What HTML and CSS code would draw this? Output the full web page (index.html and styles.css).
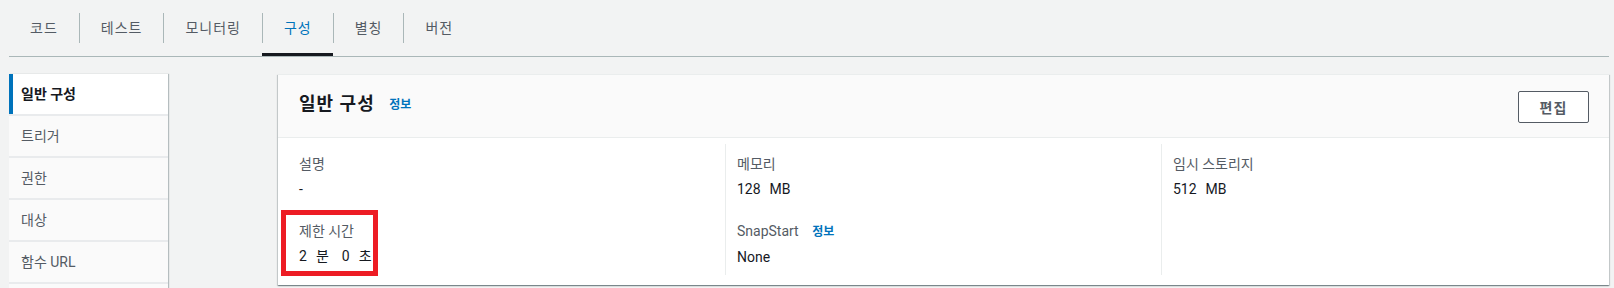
FILE: index.html
```html
<!DOCTYPE html>
<html lang="ko">
<head>
  <meta charset="UTF-8" />
  <meta name="viewport" content="width=device-width, initial-scale=1.0"/>
  <title>함수 구성</title>
  <link rel="stylesheet" href="styles.css">
</head>
<body>

  <nav class="tabs">
    <a class="tab" href="#"><span class="tab-label">코드</span></a>
    <a class="tab" href="#"><span class="tab-label">테스트</span></a>
    <a class="tab" href="#"><span class="tab-label">모니터링</span></a>
    <a class="tab active" href="#"><span class="tab-label">구성</span></a>
    <a class="tab" href="#"><span class="tab-label">별칭</span></a>
    <a class="tab" href="#"><span class="tab-label">버전</span></a>
  </nav>

  <div class="layout">
    <ul class="side-nav">
      <li class="active">일반 구성</li>
      <li>트리거</li>
      <li>권한</li>
      <li>대상</li>
      <li>함수 URL</li>
      <li></li>
    </ul>

    <section class="panel">
      <div class="panel-header">
        <h2>일반 구성 <a class="info" href="#">정보</a></h2>
        <button type="button">편집</button>
      </div>

      <div class="panel-body">
        <div class="column">
          <div class="field">
            <div class="label">설명</div>
            <div class="value">-</div>
          </div>
          <div class="field marked">
            <div class="label">제한 시간</div>
            <div class="value">2<span class="unit">분</span><span class="gap">0</span><span class="unit">초</span></div>
            <span class="highlight"></span>
          </div>
        </div>

        <div class="column">
          <div class="field">
            <div class="label">메모리</div>
            <div class="value">128<span class="unit">MB</span></div>
          </div>
          <div class="field">
            <div class="label">SnapStart <a class="info" href="#">정보</a></div>
            <div class="value">None</div>
          </div>
        </div>

        <div class="column">
          <div class="field">
            <div class="label">임시 스토리지</div>
            <div class="value">512<span class="unit">MB</span></div>
          </div>
        </div>
      </div>
    </section>
  </div>

</body>
</html>
```

FILE: styles.css
```css
body {
  margin: 0;
  background: #f2f3f3;
  font-family: Roboto, "Noto Sans CJK KR", sans-serif;
  font-size: 14px;
  color: #16191f;
  overflow: hidden;
}

a {
  text-decoration: none;
}

/* tabs */
.tabs {
  display: flex;
  margin: 0 5px 0 9px;
  border-bottom: 1px solid #aab7b8;
}

.tab {
  display: block;
  padding: 13px 0;
  color: #545b64;
  letter-spacing: 1px;
}

.tab-label {
  display: block;
  padding: 0 21px;
  line-height: 30px;
  border-left: 1px solid #aab7b8;
}

.tab:first-child .tab-label {
  border-left: none;
}

.tab.active {
  color: #0073bb;
  padding-bottom: 10px;
  border-bottom: 3px solid #16191f;
}

/* layout */
.layout {
  display: flex;
  align-items: flex-start;
  gap: 110px;
  padding: 17px 5px 0 9px;
}

.side-nav {
  list-style: none;
  margin: 0;
  padding: 0;
  width: 159px;
  flex-shrink: 0;
  background: #e9ebed;
  box-shadow: 1px 0 1px 0 rgba(0, 28, 36, 0.25);
}

.side-nav li {
  height: 40px;
  line-height: 40px;
  margin-bottom: 2px;
  padding-left: 12px;
  background: #fafafa;
  color: #545b64;
}

.side-nav li.active {
  background: #fff;
  color: #16191f;
  font-weight: bold;
  padding-left: 8px;
  border-left: 4px solid #0073bb;
}

/* panel */
.panel {
  flex: 1;
  background: #fff;
  border-top: 1px solid #eaeded;
  box-shadow: 0 1px 1px 0 rgba(0, 28, 36, 0.3),
    1px 1px 1px 0 rgba(0, 28, 36, 0.15),
    -1px 1px 1px 0 rgba(0, 28, 36, 0.15);
}

.panel-header {
  display: flex;
  justify-content: space-between;
  align-items: center;
  height: 62px;
  padding: 0 20px 0 21px;
  background: #fafafa;
  border-bottom: 1px solid #eaeded;
}

.panel-header h2 {
  margin: 0 0 4px;
  font-size: 18px;
  font-weight: bold;
  line-height: 24px;
  letter-spacing: 1px;
}

.info {
  margin-left: 8px;
  font-size: 12px;
  font-weight: bold;
  color: #0073bb;
  letter-spacing: 0;
}

.panel-header .info {
  margin-left: 9px;
  vertical-align: 1px;
}

.panel-header button {
  width: 71px;
  height: 32px;
  margin-top: 1px;
  background: #fff;
  border: 1px solid #545b64;
  border-radius: 2px;
  font-family: inherit;
  font-size: 14px;
  font-weight: bold;
  color: #545b64;
  letter-spacing: 1px;
  cursor: pointer;
}

.panel-body {
  display: grid;
  grid-template-columns: 426px 436px 1fr;
  padding: 6px 20px 10px 21px;
}

.column {
  min-height: 131px;
  padding-top: 9px;
  box-sizing: border-box;
}

.column + .column {
  border-left: 1px solid #eaeded;
  padding-left: 11px;
}

.field + .field {
  margin-top: 20px;
}

.field.marked {
  position: relative;
  display: inline-block;
}

.label {
  line-height: 22px;
  color: #545b64;
}

.label .info {
  margin-left: 10px;
}

.value {
  margin-top: 3px;
  line-height: 22px;
  color: #16191f;
}

.unit {
  margin-left: 9px;
}

.gap {
  margin-left: 13px;
}

/* red annotation box around the timeout field */
.highlight {
  position: absolute;
  left: -18px;
  top: -10px;
  width: 97px;
  height: 66px;
  box-sizing: border-box;
  border: 5px solid #ed1c24;
}
```
